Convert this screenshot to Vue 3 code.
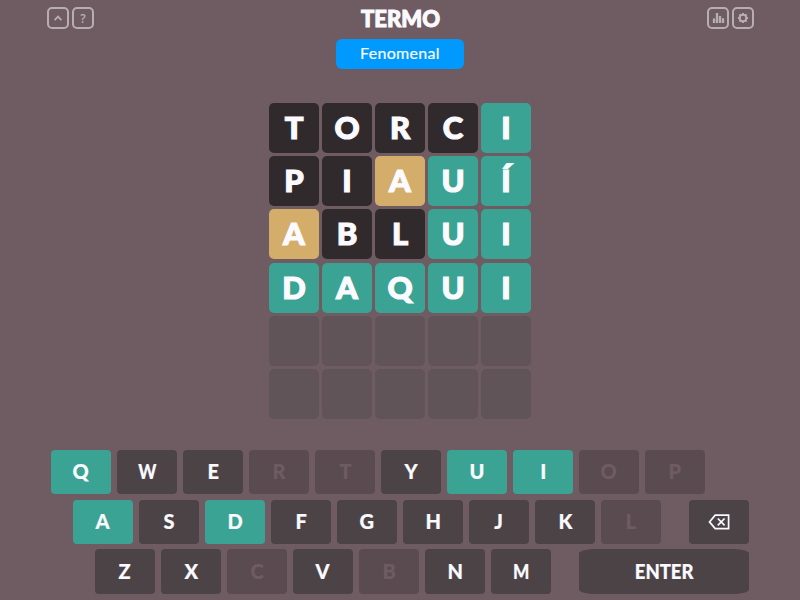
<script setup>
const board = [
  [['T', 'wrong'], ['O', 'wrong'], ['R', 'wrong'], ['C', 'wrong'], ['I', 'right']],
  [['P', 'wrong'], ['I', 'wrong'], ['A', 'place'], ['U', 'right'], ['Í', 'right']],
  [['A', 'place'], ['B', 'wrong'], ['L', 'wrong'], ['U', 'right'], ['I', 'right']],
  [['D', 'right'], ['A', 'right'], ['Q', 'right'], ['U', 'right'], ['I', 'right']],
  Array(5).fill(['', 'empty']),
  Array(5).fill(['', 'empty']),
]
const keys = ['QWERTYUIOP', 'ASDFGHJKL', 'ZXCVBNM'].map((r) => r.split(''))
const keyState = (k) => ('QADUI'.includes(k) ? 'hit' : 'RTOPLCB'.includes(k) ? 'used' : '')
</script>

<template>
  <main class="game">
    <header class="top">
      <div class="buttons">
        <button class="icon-btn" aria-label="Modos">
          <svg viewBox="0 0 22 22"><path d="M7.6 13.2 11 9.6 14.4 13.2" fill="none" stroke="currentColor" stroke-width="1.8" /></svg>
        </button>
        <button class="icon-btn help">?</button>
      </div>
      <h1>TERMO</h1>
      <div class="buttons">
        <button class="icon-btn" aria-label="Progresso">
          <svg viewBox="0 0 22 22"><path d="M7 16v-4.5M10 16V6M13 16V9M16 16v-4.8" fill="none" stroke="currentColor" stroke-width="2.3" /></svg>
        </button>
        <button class="icon-btn" aria-label="Ajustes">
          <svg viewBox="0 0 22 22">
            <circle cx="11" cy="11" r="3.3" fill="none" stroke="currentColor" stroke-width="2" />
            <g stroke="currentColor" stroke-width="2">
              <path v-for="a in 8" :key="a" d="M11 7.5V5.9" :transform="`rotate(${a * 45} 11 11)`" />
            </g>
          </svg>
        </button>
      </div>
    </header>

    <div class="toast"><span>Fenomenal</span></div>

    <section class="board">
      <div v-for="(row, r) in board" :key="r" class="row">
        <div v-for="(cell, c) in row" :key="c" class="tile" :class="cell[1]">{{ cell[0] }}</div>
      </div>
    </section>

    <section class="keyboard">
      <div v-for="(row, r) in keys" :key="r" class="key-row">
        <button v-for="k in row" :key="k" class="key" :class="keyState(k)">
          <span class="cap" :class="{ wide: 'WM'.includes(k) }">{{ k }}</span>
        </button>
        <button v-if="r === 1" class="key last" aria-label="Apagar">
          <svg class="erase" viewBox="0 0 22 16">
            <path d="M7.2 1.2H20.6V14.6H7.2L1.5 7.9Z M9.8 4.5l6.8 6.8M16.6 4.5l-6.8 6.8" fill="none" stroke="currentColor" stroke-width="1.7" />
          </svg>
        </button>
        <button v-if="r === 2" class="key last enter"><span class="cap">ENTER</span></button>
      </div>
    </section>
  </main>
</template>

<style>
body {
  background: #6e5c62;
}
</style>

<style scoped>
.game {
  box-sizing: border-box;
  width: 800px;
  height: 600px;
  overflow: hidden;
  display: flex;
  flex-direction: column;
  align-items: center;
  background: #6e5c62;
  color: #fafaff;
  font-family: Lato, "Open Sans", sans-serif;
}
button {
  border: 0;
  padding: 0;
  margin: 0;
  font: inherit;
  color: inherit;
}
.top {
  box-sizing: border-box;
  width: 100%;
  height: 38px;
  padding: 0 46px 0 47px;
  display: flex;
  justify-content: space-between;
  align-items: flex-start;
}
.buttons {
  display: flex;
  gap: 3px;
  padding-top: 7px;
}
.icon-btn {
  box-sizing: border-box;
  width: 22px;
  height: 22px;
  border: 2px solid #b7aeb1;
  border-radius: 5px;
  background: none;
  color: #b7aeb1;
  display: flex;
  align-items: center;
  justify-content: center;
}
.icon-btn svg {
  flex: none;
  width: 22px;
  height: 22px;
}
.help {
  font-family: "Open Sans", sans-serif;
  font-size: 12px;
  font-weight: 600;
}
h1 {
  margin: 0;
  font-size: 22px;
  line-height: 38px;
  font-weight: 900;
  -webkit-text-stroke: 1px #fafaff;
}
.toast {
  box-sizing: border-box;
  width: 128px;
  height: 30px;
  margin-top: 0.6px;
  padding-bottom: 2px;
  border-radius: 6px;
  background: #009aff;
  display: flex;
  align-items: center;
  justify-content: center;
  font-size: 16px;
  letter-spacing: 0.3px;
  -webkit-text-stroke: 0.2px #fafaff;
}
.board {
  margin-top: 34.3px;
  display: grid;
  gap: 3.25px;
}
.row {
  display: flex;
  gap: 3px;
}
.tile {
  width: 50px;
  height: 50px;
  border-radius: 10%;
  font-size: 31px;
  line-height: 48.6px;
  font-weight: 900;
  text-align: center;
  -webkit-text-stroke: 1.2px #fafaff;
}
.wrong {
  background: #312a2c;
}
.right {
  background: #3aa394;
}
.place {
  background: #d3ad69;
}
.empty {
  background: #615458;
}
.keyboard {
  width: 698px;
  margin-top: 31px;
  display: grid;
  grid-template-rows: 44px 44px 45px;
  row-gap: 5.5px;
}
.key-row {
  display: flex;
  gap: 6px;
}
.key-row:nth-child(2) {
  padding-left: 22px;
}
.key-row:nth-child(3) {
  padding-left: 44px;
}
.key {
  box-sizing: border-box;
  width: 60px;
  border-radius: 4px;
  background: #4c4347;
  font-size: 21.5px;
  font-weight: 900;
  line-height: 30px;
  display: flex;
  align-items: center;
  justify-content: center;
}
.key-row:nth-child(3) .key {
  padding-top: 1px;
}
.cap {
  padding-bottom: 2px;
  transform: scaleX(0.93);
  -webkit-text-stroke: 0.2px currentColor;
}
.wide {
  transform: scaleX(0.8);
}
.hit {
  background: #3aa394;
}
.used {
  background: #5a4b50;
  color: #6e5c62;
}
.last {
  margin-left: auto;
}
.enter {
  width: 170px;
  border-radius: 10%;
}
.enter .cap {
  transform: scaleX(0.86);
}
.erase {
  width: 22px;
  height: 16px;
}
</style>
